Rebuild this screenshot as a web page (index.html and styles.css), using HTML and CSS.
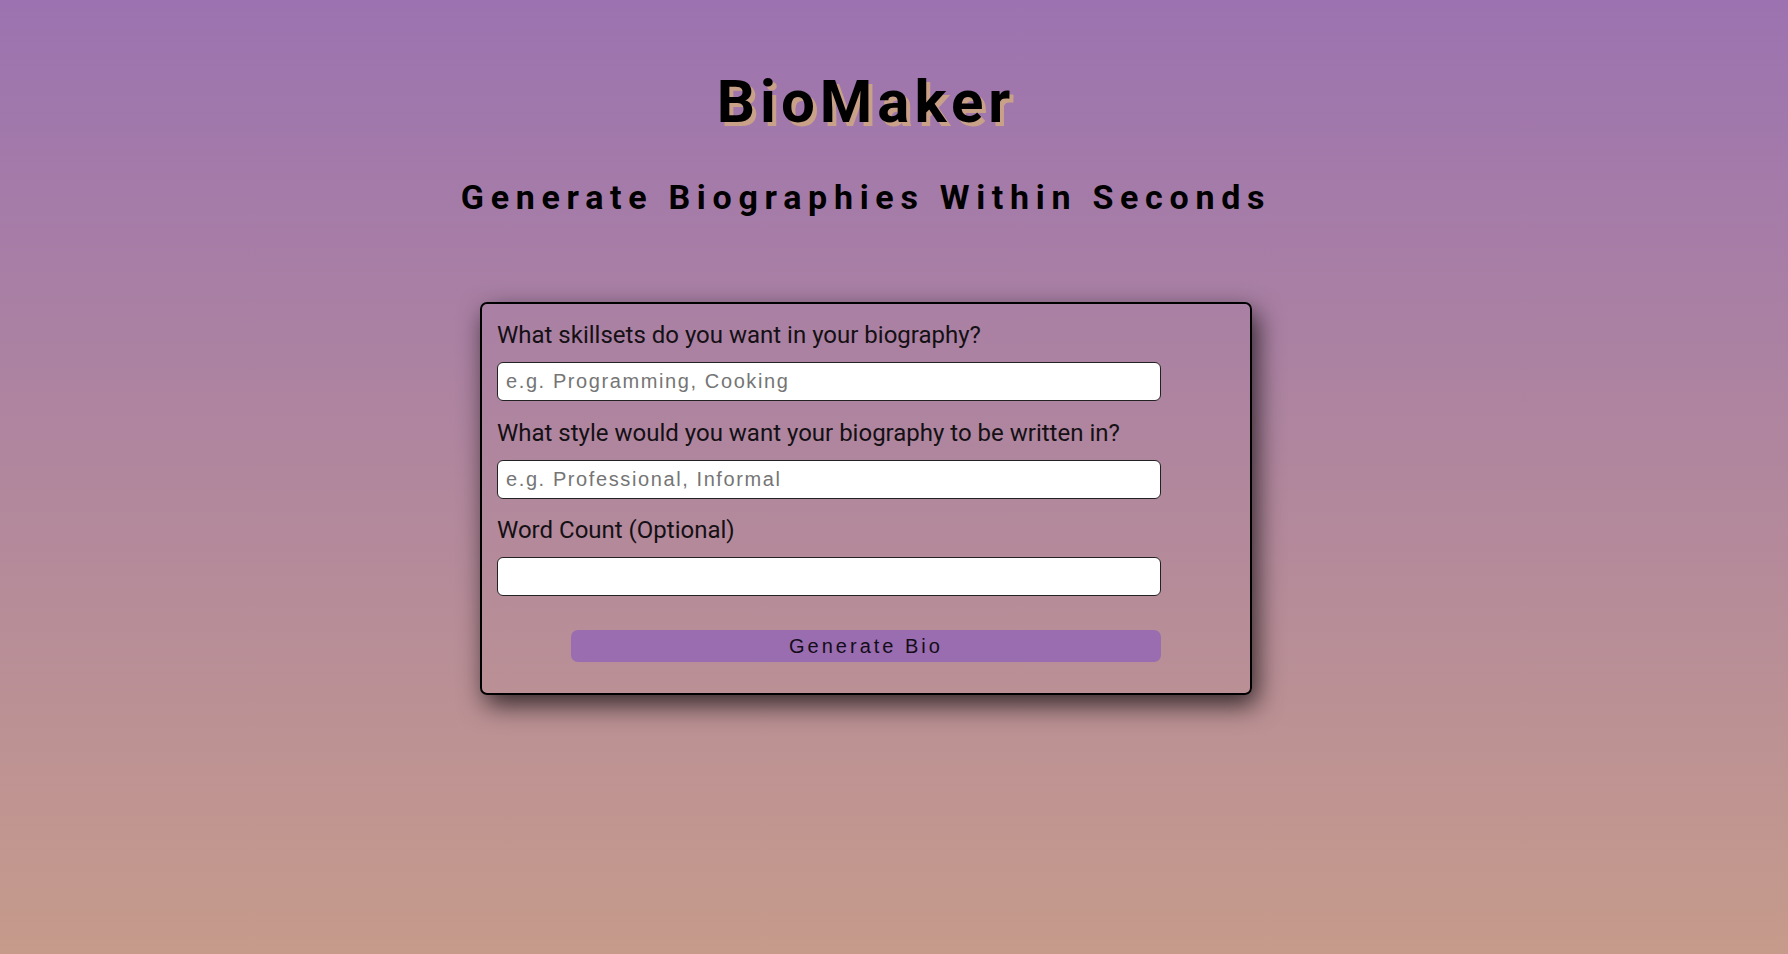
FILE: index.html
```html
<!DOCTYPE html>
<html lang="en">
<head>
<meta charset="utf-8">
<title>BioMaker</title>
<link rel="stylesheet" href="styles.css">
</head>
<body>
<main class="page">
  <header class="hero">
    <h1 class="title">BioMaker</h1>
    <h2 class="subtitle">Generate Biographies Within Seconds</h2>
  </header>
  <form class="card">
    <div class="field">
      <label class="label" for="skills">What skillsets do you want in your biography?</label>
      <input class="input" id="skills" type="text" placeholder="e.g. Programming, Cooking">
    </div>
    <div class="field">
      <label class="label" for="style">What style would you want your biography to be written in?</label>
      <input class="input" id="style" type="text" placeholder="e.g. Professional, Informal">
    </div>
    <div class="field">
      <label class="label" for="count">Word Count (Optional)</label>
      <input class="input" id="count" type="text">
    </div>
    <button class="btn" type="button">Generate Bio</button>
  </form>
</main>
</body>
</html>
```
FILE: styles.css
```css
html, body {
  margin: 0;
  padding: 0;
}
body {
  min-height: 954px;
  background: linear-gradient(180deg, #9c73b0 0%, #c69b8b 100%);
  font-family: Roboto, "Liberation Sans", sans-serif;
  color: #000;
}
.page {
  display: flex;
  flex-direction: column;
  align-items: center;
  padding: 67px 56px 0 0;
}
.hero {
  display: flex;
  flex-direction: column;
  align-items: center;
}
.title {
  margin: 0;
  font-size: 60px;
  font-weight: 700;
  line-height: 70px;
  letter-spacing: 5px;
  text-shadow: 4px 4px 0 #c9a088;
}
.subtitle {
  margin: 40px 0 0;
  font-size: 34px;
  font-weight: 700;
  line-height: 40px;
  letter-spacing: 6.7px;
}
.card {
  margin-top: 85px;
  width: 738px;
  padding: 17px 15px 31px;
  border: 2px solid #000;
  border-radius: 7px;
  box-shadow: 5px 10px 26px rgba(0, 0, 0, 0.72);
  display: flex;
  flex-direction: column;
}
.field {
  display: flex;
  flex-direction: column;
  margin-bottom: 17.5px;
}
.field:last-of-type {
  margin-bottom: 34px;
}
.label {
  font-size: 24px;
  line-height: 28px;
  color: #141014;
  margin-bottom: 13px;
}
.input {
  box-sizing: border-box;
  width: 90%;
  height: 39px;
  margin: 0;
  padding: 0 8px;
  border: 1px solid #222;
  border-radius: 6px;
  background: #fff;
  font-family: "Liberation Sans", Arial, sans-serif;
  font-size: 20px;
  letter-spacing: 1.6px;
  outline: none;
}
.input::placeholder {
  color: #757575;
}
.btn {
  align-self: center;
  width: 80%;
  height: 32px;
  margin: 0;
  padding: 0;
  border: none;
  border-radius: 7px;
  background: #996db0;
  color: #140c18;
  font-family: "Liberation Sans", Arial, sans-serif;
  font-size: 20px;
  letter-spacing: 3px;
  cursor: pointer;
}
```
